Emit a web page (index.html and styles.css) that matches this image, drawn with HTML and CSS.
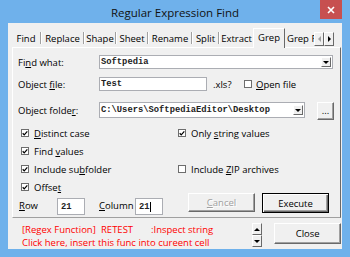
FILE: index.html
```html
<!DOCTYPE html>
<html lang="en">
<head>
  <meta charset="UTF-8" />
  <title>Regular Expression Find</title>
  <link rel="stylesheet" href="styles.css">
</head>
<body>
  <div class="window">
    <div class="titlebar">
      <span class="title">Regular Expression Find</span>
      <span class="close-x">
        <svg width="8" height="8" viewBox="0 0 8 8"><path d="M1 1L7 7M7 1L1 7" stroke="#fff" stroke-width="1.6"/></svg>
      </span>
    </div>

    <div class="client">
      <div class="tabs">
        <span class="tab w-find">Find</span><span class="sep"></span>
        <span class="tab w-replace">Replace</span><span class="sep"></span>
        <span class="tab w-shape">Shape</span><span class="sep"></span>
        <span class="tab w-sheet">Sheet</span><span class="sep"></span>
        <span class="tab w-rename">Rename</span><span class="sep"></span>
        <span class="tab w-split">Split</span><span class="sep"></span>
        <span class="tab w-extract">Extract</span>
        <span class="tab active">Grep</span>
        <span class="tab w-grepr">Grep R</span>
        <span class="scroller">
          <span class="arrow-btn"><span class="tri-left off"></span></span>
          <span class="arrow-btn"><span class="tri-right"></span></span>
        </span>
      </div>

      <div class="panel">
        <div class="row row-find">
          <label class="lbl">Fi<u>n</u>d what:</label>
          <div class="combo combo-find">
            <span class="value">Softpedia</span>
            <span class="drop"><span class="tri-down"></span></span>
          </div>
        </div>

        <div class="row row-file">
          <label class="lbl">Object <u>f</u>ile:</label>
          <div class="textbox box-file"><span class="value">Test</span></div>
          <span class="ext">.xls?</span>
          <span class="cb"></span>
          <span class="cb-text"><u>O</u>pen file</span>
        </div>

        <div class="row row-folder">
          <label class="lbl">Object folde<u>r</u>:</label>
          <div class="combo combo-folder">
            <span class="value">C:\Users\SoftpediaEditor\Desktop</span>
            <span class="drop"><span class="tri-down"></span></span>
          </div>
          <button class="btn btn-browse">...</button>
        </div>

        <div class="checks">
          <div class="check"><span class="cb on"><svg width="7" height="7" viewBox="0 0 7 7"><path d="M0.8 3.2L2.6 5.2L6.2 1" fill="none" stroke="#000" stroke-width="1.4"/></svg></span><span><u>D</u>istinct case</span></div>
          <div class="check"><span class="cb on"><svg width="7" height="7" viewBox="0 0 7 7"><path d="M0.8 3.2L2.6 5.2L6.2 1" fill="none" stroke="#000" stroke-width="1.4"/></svg></span><span>Only <u>s</u>tring values</span></div>
          <div class="check"><span class="cb on"><svg width="7" height="7" viewBox="0 0 7 7"><path d="M0.8 3.2L2.6 5.2L6.2 1" fill="none" stroke="#000" stroke-width="1.4"/></svg></span><span>Find <u>v</u>alues</span></div>
          <div class="check"></div>
          <div class="check"><span class="cb on"><svg width="7" height="7" viewBox="0 0 7 7"><path d="M0.8 3.2L2.6 5.2L6.2 1" fill="none" stroke="#000" stroke-width="1.4"/></svg></span><span>Include su<u>b</u>folder</span></div>
          <div class="check"><span class="cb"></span><span>Include <u>Z</u>IP archives</span></div>
          <div class="check"><span class="cb on"><svg width="7" height="7" viewBox="0 0 7 7"><path d="M0.8 3.2L2.6 5.2L6.2 1" fill="none" stroke="#000" stroke-width="1.4"/></svg></span><span>Offse<u>t</u></span></div>
          <div class="check"></div>
        </div>

        <div class="row row-bottom">
          <label class="lbl-small lbl-row"><u>R</u>ow</label>
          <div class="textbox box-num"><span class="value">21</span></div>
          <label class="lbl-small lbl-col"><u>C</u>olumn</label>
          <div class="textbox box-num"><span class="value">21</span><span class="caret"></span></div>
          <button class="btn btn-cancel" disabled><u>C</u>ancel</button>
          <button class="btn btn-exec">Execute</button>
        </div>
      </div>

      <div class="footer">
        <div class="info">
          <div><span class="fn">[Regex Function]</span><span class="fname">RETEST</span>:Inspect string</div>
          <div>Click here, insert this func into cureent cell</div>
        </div>
        <div class="spin">
          <span class="spin-btn"><span class="tri-up"></span></span>
          <span class="spin-btn"><span class="tri-down"></span></span>
        </div>
        <button class="btn btn-close">Close</button>
      </div>
    </div>
  </div>
</body>
</html>
```

FILE: styles.css
```css
body {
  margin: 0;
  font-family: "Open Sans", "Noto Sans", sans-serif;
  font-size: 9.5px;
  color: #000;
}

.window {
  width: 350px;
  height: 257px;
  background: #6fb1eb;
  display: flex;
  flex-direction: column;
}

.titlebar {
  height: 23px;
  display: grid;
  grid-template-columns: 1fr auto 1fr;
  grid-template-rows: 23px;
}

.title {
  grid-column: 2;
  font-size: 11.5px;
  line-height: 26px;
  color: #111;
}

.close-x {
  grid-column: 3;
  justify-self: end;
  width: 22px;
  height: 19px;
  margin-right: 8px;
  background: #c75050;
  display: flex;
  align-items: center;
  justify-content: center;
}

.client {
  flex: 1;
  margin: 0 8px 8px 8px;
  background: #f0f0f0;
  padding: 5px 1px 0 4px;
}

/* tab strip */
.tabs {
  display: flex;
  align-items: flex-end;
  height: 19px;
}

.tab {
  height: 16px;
  line-height: 16px;
  text-align: center;
  white-space: nowrap;
}

.sep {
  width: 0;
  height: 12px;
  margin-bottom: 3px;
  border-left: 1px solid #a0a0a0;
  border-right: 1px solid #fff;
}

.w-find { width: 28px; }
.w-replace { width: 41px; }
.w-shape { width: 30px; }
.w-sheet { width: 30px; }
.w-rename { width: 42px; }
.w-split { width: 25px; }
.w-extract { width: 33px; }

.tab.active {
  width: 32px;
  height: 20px;
  line-height: 18px;
  box-sizing: border-box;
  margin-bottom: -1px;
  position: relative;
  background: #f0f0f0;
  border-top: 1px solid #fff;
  border-left: 1px solid #fff;
  border-right: 1px solid #696969;
}

.w-grepr {
  width: 29px;
  overflow: hidden;
  text-align: left;
  padding-left: 2px;
  box-sizing: border-box;
}

.scroller {
  display: flex;
  margin-bottom: 1px;
}

.arrow-btn {
  width: 10px;
  height: 14px;
  box-sizing: border-box;
  background: #f0f0f0;
  border: 1px solid;
  border-color: #fff #696969 #696969 #fff;
  display: flex;
  align-items: center;
  justify-content: center;
}

.tri-left {
  border-top: 3px solid transparent;
  border-bottom: 3px solid transparent;
  border-right: 3px solid #000;
}

.tri-left.off {
  border-right-color: #a0a0a0;
}

.tri-right {
  border-top: 3px solid transparent;
  border-bottom: 3px solid transparent;
  border-left: 3px solid #000;
}

.tri-down {
  border-left: 3px solid transparent;
  border-right: 3px solid transparent;
  border-top: 3px solid #000;
}

.tri-up {
  border-left: 3px solid transparent;
  border-right: 3px solid transparent;
  border-bottom: 3px solid #000;
}

/* tab page */
.panel {
  width: 329px;
  height: 171px;
  box-sizing: border-box;
  border: 1px solid;
  border-color: #fff #696969 #a0a0a0 #fff;
  padding-left: 5px;
}

.row {
  display: flex;
  align-items: center;
}

.lbl {
  width: 81px;
}

.row-find {
  margin-top: 7px;
  height: 14px;
}

.row-file {
  margin-top: 8px;
  height: 14px;
}

.row-folder {
  margin-top: 11px;
  height: 18px;
  align-items: flex-start;
}

.row-folder .lbl {
  line-height: 18px;
}

.combo, .textbox {
  box-sizing: border-box;
  background: #fff;
  border: 1px solid #abadb3;
  display: flex;
  align-items: center;
  font-family: "Liberation Mono", monospace;
  font-weight: bold;
  font-size: 8.8px;
  color: #222;
}

.value {
  flex: 1;
  padding-left: 1px;
  white-space: nowrap;
  overflow: hidden;
}

.combo-find {
  width: 234px;
  height: 14px;
}

.combo-folder {
  width: 206px;
  height: 16px;
}

.drop {
  width: 10px;
  height: 10px;
  margin-right: 1px;
  box-sizing: border-box;
  border: 1px solid;
  border-color: #fff #696969 #696969 #fff;
  background: #f0f0f0;
  display: flex;
  align-items: center;
  justify-content: center;
}

.box-file {
  width: 108px;
  height: 14px;
}

.ext {
  margin-left: 6px;
  width: 26px;
}

.cb {
  width: 8px;
  height: 8px;
  box-sizing: border-box;
  border: 1px solid #6d6d6d;
  background: #fff;
  display: inline-flex;
  align-items: center;
  justify-content: center;
  flex-shrink: 0;
}

.row-file .cb {
  margin-left: 5px;
}

.cb-text {
  margin-left: 4px;
}

.btn {
  box-sizing: border-box;
  background: #f0f0f0;
  border: 1px solid;
  border-color: #fff #696969 #696969 #fff;
  box-shadow: inset -1px -1px #a0a0a0;
  font-family: "Open Sans", "Noto Sans", sans-serif;
  font-size: 9.5px;
  color: #000;
  padding: 0;
}

.btn-browse {
  width: 17px;
  height: 18px;
  margin-left: 12px;
  line-height: 12px;
}

/* checkbox grid */
.checks {
  margin-top: 4px;
  padding-left: 3px;
  display: grid;
  grid-template-columns: 157px auto;
  grid-auto-rows: 18px;
}

.check {
  display: flex;
  align-items: center;
}

.check .cb {
  margin-right: 5px;
}

/* bottom row */
.row-bottom {
  margin-top: -3px;
  height: 22px;
  align-items: flex-start;
}

.lbl-small {
  align-self: flex-end;
  line-height: 18px;
}

.lbl-row {
  margin-left: 1px;
  width: 38px;
}

.lbl-col {
  margin-left: 14px;
  width: 36px;
}

.box-num {
  width: 28px;
  height: 17px;
  align-self: flex-end;
}

.box-num .value {
  flex: none;
  padding-left: 3px;
}

.box-num .caret {
  width: 1px;
  height: 10px;
  background: #000;
}

.btn-cancel {
  margin-left: 25px;
  width: 67px;
  height: 19px;
  color: #a0a0a0;
  text-shadow: 1px 1px #fff;
}

.btn-exec {
  margin-left: 7px;
  width: 67px;
  height: 20px;
  border: 1px solid #000;
  box-shadow: inset 1px 1px #fff, inset -1px -1px #696969, inset -2px -2px #a0a0a0;
}

/* footer */
.footer {
  display: flex;
  align-items: flex-start;
  padding-top: 5px;
}

.info {
  width: 231px;
  padding-left: 10px;
  color: #f00;
  line-height: 13px;
}

.fn {
  display: inline-block;
  width: 79px;
}

.fname {
  display: inline-block;
  width: 50px;
}

.spin {
  display: flex;
  flex-direction: column;
  width: 11px;
}

.spin-btn {
  height: 12px;
  box-sizing: border-box;
  border: 1px solid;
  border-color: #fff #696969 #696969 #fff;
  background: #f0f0f0;
  display: flex;
  align-items: center;
  justify-content: center;
}

.btn-close {
  margin-left: 12px;
  width: 67px;
  height: 21px;
}
```
